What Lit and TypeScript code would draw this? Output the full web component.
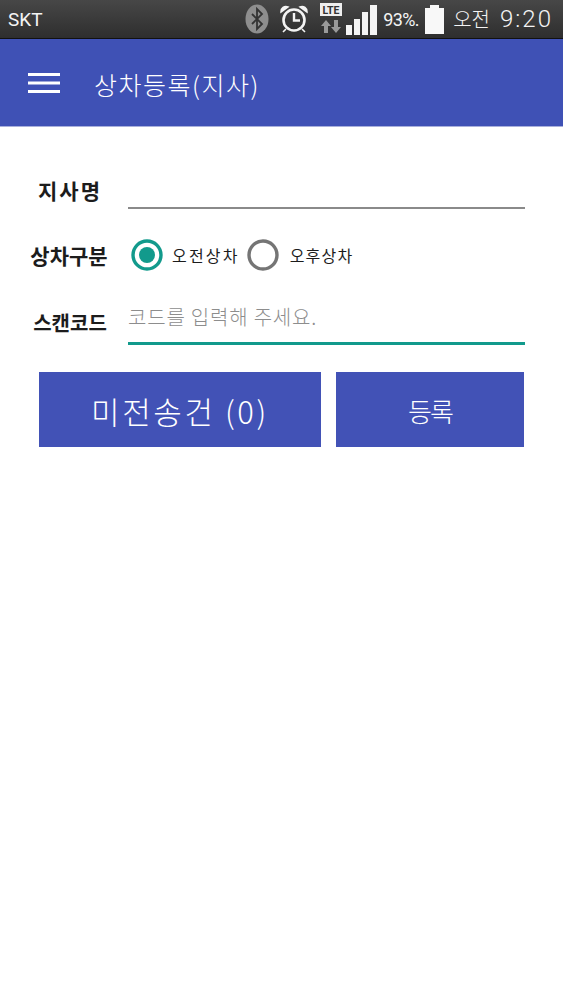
import { LitElement, html, css } from "lit";
import { customElement } from "lit/decorators.js";

@customElement("app-root")
export class AppRoot extends LitElement {
  static styles = css`
    :host { display: block; width: 563px; height: 1000px; background: #fff; overflow: hidden;
      font-family: "Noto Sans CJK KR", "Noto Sans", sans-serif; color: #1c1c1c; }
    .status { height: 38px; background: linear-gradient(#474747, #2e2e2e); border-bottom: 1px solid #111; display: flex; align-items: center;
      padding: 0 10px 0 8px; color: #f4f4f4; }
    .carrier { font: 19px Roboto, sans-serif; flex: 1; }
    .status svg { display: block; flex: none; }
    .icons { display: flex; align-items: center; }
    .alarm { margin-left: 10px; }
    .lte { margin-left: 10px; }
    .signal { margin-left: 3px; }
    .battery { margin-left: 6px; }
    .pct { font: 18px Roboto, sans-serif; letter-spacing: -0.6px; margin-left: 6px; width: 36px; white-space: nowrap; }
    .ampm { font-size: 20px; font-weight: 300; margin-left: 9px; line-height: 1; }
    .time { font: 300 24px Roboto, sans-serif; letter-spacing: 2px; margin-left: 10px; }
    .bar { height: 87px; background: #3f51b5; border-bottom: 1px solid #a9b0dc; display: flex; align-items: center; padding-left: 28px; color: #fff; }
    .bar svg { margin-right: 34px; }
    .title { font-size: 25px; font-weight: 300; line-height: 1; letter-spacing: 1.5px; transform: translateY(2px); }
    .form { display: grid; grid-template-columns: 128px 397px; padding-top: 33px; }
    .label { font-size: 21px; font-weight: 700; text-align: center; line-height: 1; white-space: nowrap; }
    .name-l { align-self: start; padding-top: 20px; padding-left: 12px; letter-spacing: 2px; }
    .name-f { height: 47px; border-bottom: 2px solid #8a8a8a; }
    .kind-l { align-self: center; padding-left: 10px; padding-top: 2px; }
    .radios { height: 91px; display: flex; align-items: center; padding-left: 3px; box-sizing: border-box; }
    .radio { width: 32px; height: 32px; flex: none; }
    .rt { font-size: 16px; font-weight: 400; letter-spacing: 2.2px; margin: 0 7px 0 9px; line-height: 1; }
    .rt2 { margin-left: 11px; letter-spacing: 1.2px; }
    .code-l { align-self: start; padding-top: 13px; padding-left: 12px; font-size: 20px; }
    .code-f { height: 45px; box-sizing: border-box; border-bottom: 3px solid #129a8c; color: #8d8d8d; font-size: 20px; font-weight: 300; letter-spacing: 0.8px; padding-top: 5px; line-height: 1.2; white-space: nowrap; }
    .buttons { display: flex; gap: 15px; padding: 27px 39px 0; }
    .btn { height: 75px; background: #4252b6; color: #fff; display: flex; align-items: center; justify-content: center; font-weight: 300; font-size: 31px; line-height: 1; }
    .b1 { width: 282px; letter-spacing: 2.6px; padding-top: 2px; box-sizing: border-box; }
    .b2 { width: 188px; font-size: 26px; letter-spacing: -2px; padding-top: 2px; box-sizing: border-box; }
  `;

  render() {
    return html`
      <div class="status">
        <div class="carrier">SKT</div>
        <div class="icons">
          <svg width="24" height="30" viewBox="0 0 24 30"><ellipse cx="12" cy="15" rx="11.5" ry="14.5" fill="#8e8e8e"/><path d="M7 10l10 10-5 5V5l5 5-10 10" fill="none" stroke="#333" stroke-width="1.8"/></svg>
          <svg class="alarm" width="30" height="30" viewBox="0 0 30 30"><circle cx="15" cy="16" r="10.5" fill="none" stroke="#f4f4f4" stroke-width="2.6"/><path d="M15 9v7.5h6" fill="none" stroke="#f4f4f4" stroke-width="2.4"/><path d="M2 8a5 5 0 0 1 7-5zM28 8a5 5 0 0 0-7-5zM7 25l-3 3M23 25l3 3" fill="#f4f4f4" stroke="#f4f4f4" stroke-width="1.6"/></svg>
          <svg class="lte" width="24" height="32" viewBox="0 0 24 32"><rect x="1" y="0" width="22" height="13" fill="#efefef"/><text x="12" y="10.5" text-anchor="middle" font-family="Roboto" font-weight="700" font-size="10.5" fill="#333">LTE</text><path d="M7 17l-5 6h3v7h4v-7h3zM17 30l5-6h-3v-7h-4v7h-3z" fill="#9a9a9a"/></svg>
          <svg class="signal" width="31" height="31" viewBox="0 0 31 31"><path d="M0 21h6v10H0zM8 15h6v16H8zM16 8h6v23h-6zM24 1h7v30h-7z" fill="#f4f4f4"/></svg>
          <span class="pct">93%.</span>
          <svg class="battery" width="19" height="29" viewBox="0 0 19 29"><path d="M5 0h9v3h5v26H0V3h5z" fill="#f8f8f8"/></svg>
          <span class="ampm">오전</span>
          <span class="time">9:20</span>
        </div>
      </div>
      <div class="bar">
        <svg width="32" height="20" viewBox="0 0 32 20"><path d="M0 1.5h32M0 10h32M0 18.5h32" stroke="#fff" stroke-width="3"/></svg>
        <div class="title">상차등록(지사)</div>
      </div>
      <div class="form">
        <div class="label name-l">지사명</div>
        <div class="name-f"></div>
        <div class="label kind-l">상차구분</div>
        <div class="radios">
          <svg class="radio" viewBox="0 0 32 32"><circle cx="16" cy="16" r="14" fill="none" stroke="#129a8c" stroke-width="3.4"/><circle cx="16" cy="16" r="8" fill="#129a8c"/></svg>
          <span class="rt">오전상차</span>
          <svg class="radio" viewBox="0 0 32 32"><circle cx="16" cy="16" r="14" fill="none" stroke="#757575" stroke-width="3.4"/></svg>
          <span class="rt rt2">오후상차</span>
        </div>
        <div class="label code-l">스캔코드</div>
        <div class="code-f">코드를 입력해 주세요.</div>
      </div>
      <div class="buttons">
        <div class="btn b1">미전송건 (0)</div>
        <div class="btn b2">등록</div>
      </div>
    `;
  }
}
